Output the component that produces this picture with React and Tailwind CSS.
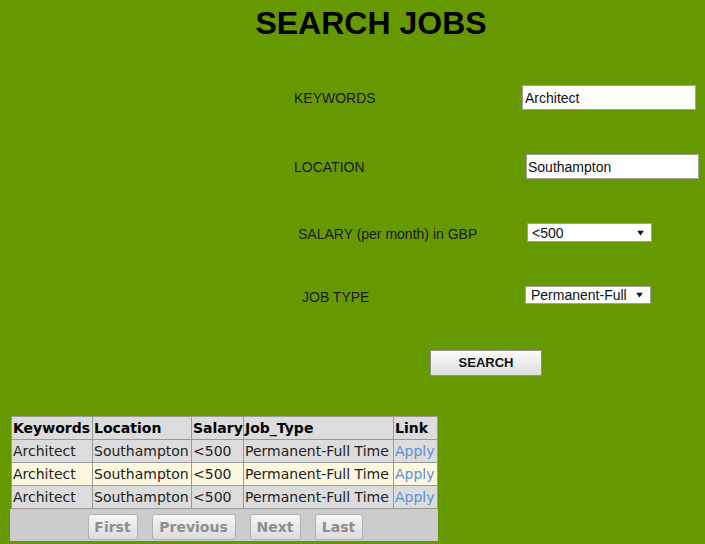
import React from 'react';

const rows = [
  { kw: 'Architect', loc: 'Southampton', sal: '<500', type: 'Permanent-Full Time', alt: false },
  { kw: 'Architect', loc: 'Southampton', sal: '<500', type: 'Permanent-Full Time', alt: true },
  { kw: 'Architect', loc: 'Southampton', sal: '<500', type: 'Permanent-Full Time', alt: false },
];

const font = "font-['Liberation_Sans',Arial,sans-serif]";

// static stand-in for a native select box
const Dropdown = ({ value, width, pad }) => (
  <div className={`relative h-full ${width} ${pad} flex items-center bg-white border border-[#a0a0a0] text-[14px] leading-none text-[#111] ${font}`}>
    {value}
    <svg className="absolute top-1/2 -translate-y-1/2 right-[7px]" width="7" height="5" viewBox="0 0 7 5">
      <path d="M0 0 L7 0 L3.5 5 Z" fill="#111" />
    </svg>
  </div>
);

const PageBtn = ({ children, width }) => (
  <button className={`${width} h-[26px] border border-[#b0b0b0] rounded-[3px] bg-gradient-to-b from-[#f6f6f6] to-[#dcdcdc] text-[#8e8e8e] font-bold text-[14px] leading-none font-['DejaVu_Sans',sans-serif]`}>
    {children}
  </button>
);

export default function App() {
  const label = `text-[14px] leading-[16px] text-[#1a1a1a] ${font}`;
  const field = `h-full bg-white border border-[#a0a0a0] text-[14px] text-[#111] ${font} outline-none`;
  const cell = 'border border-[#9a9a9a] px-[1px] py-0 whitespace-nowrap leading-[20px]';

  return (
    <div className="min-h-screen bg-[#669900] overflow-hidden">
      <h1 className={`pl-[37px] pt-[7px] text-center text-[32px] leading-[32px] font-bold text-black ${font}`}>
        SEARCH JOBS
      </h1>

      {/* form */}
      <div className="flex items-center h-[25px] mt-[46px]">
        <span className={`${label} ml-[294px] w-[228px] mt-[1px]`}>KEYWORDS</span>
        <input readOnly value="Architect" className={`${field} w-[174px] pl-[2px]`} />
      </div>

      <div className="flex items-center h-[25px] mt-[44px]">
        <span className={`${label} ml-[294px] w-[232px] mt-[1px]`}>LOCATION</span>
        <input readOnly value="Southampton" className={`${field} w-[173px] pl-[1px]`} />
      </div>

      <div className="flex items-center h-[19px] mt-[44px]">
        <span className={`${label} ml-[298px] w-[229px] mt-[3px]`}>SALARY (per month) in GBP</span>
        <Dropdown value="<500" width="w-[125px]" pad="pl-[4px]" />
      </div>

      <div className="flex items-center h-[18px] mt-[44px]">
        <span className={`${label} ml-[302px] w-[223px] mt-[3px]`}>JOB TYPE</span>
        <Dropdown value="Permanent-Full" width="w-[126px]" pad="pl-[5px]" />
      </div>

      <div className="mt-[45px] ml-[430px]">
        <button className={`w-[112px] h-[26px] border border-[#8f8f8f] bg-gradient-to-b from-[#fbfbfb] to-[#dedede] text-[13px] font-bold text-[#111] ${font}`}>
          SEARCH
        </button>
      </div>

      {/* results */}
      <div className="mt-[40px] ml-[10px] w-[428px]">
        <table className="ml-[1px] w-[426px] table-fixed border-collapse text-[14px] font-['DejaVu_Sans',Verdana,sans-serif]">
          <colgroup>
            <col className="w-[81px]" />
            <col className="w-[99px]" />
            <col className="w-[52px]" />
            <col className="w-[150px]" />
            <col className="w-[44px]" />
          </colgroup>
          <thead>
            <tr className="h-[23px] bg-[#dcdcdc]">
              {['Keywords', 'Location', 'Salary', 'Job_Type', 'Link'].map((h) => (
                <th key={h} className={`${cell} text-left font-bold text-black`}>
                  {h}
                </th>
              ))}
            </tr>
          </thead>
          <tbody>
            {rows.map((r, i) => (
              <tr key={i} className={`h-[23px] ${r.alt ? 'bg-[#fff8e1]' : 'bg-[#dcdcdc]'}`}>
                <td className={`${cell} text-[#222]`}>{r.kw}</td>
                <td className={`${cell} text-[#222]`}>{r.loc}</td>
                <td className={`${cell} text-[#222]`}>{r.sal}</td>
                <td className={`${cell} text-[#222]`}>{r.type}</td>
                <td className={`${cell} text-[#5b8fd8]`}>Apply</td>
              </tr>
            ))}
          </tbody>
        </table>
        <div className="h-[32px] bg-[#cccccc] flex justify-center items-start gap-[14px] pt-[5px] pl-[2px]">
          <PageBtn width="w-[50px]">First</PageBtn>
          <PageBtn width="w-[84px]">Previous</PageBtn>
          <PageBtn width="w-[51px]">Next</PageBtn>
          <PageBtn width="w-[48px]">Last</PageBtn>
        </div>
      </div>
    </div>
  );
}
